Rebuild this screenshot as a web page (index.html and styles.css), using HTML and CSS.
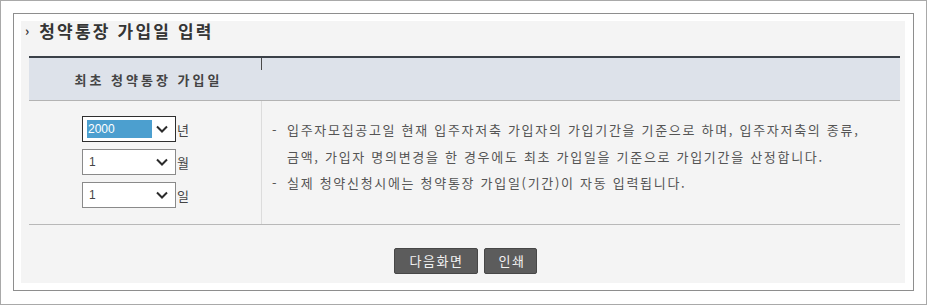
FILE: index.html
```html
<!DOCTYPE html>
<html lang="ko">
<head>
<meta charset="utf-8">
<title>청약통장 가입일 입력</title>
<link rel="stylesheet" href="styles.css">
</head>
<body>
<div class="page">
  <div class="frame">
    <div class="panel">
      <h2 class="title"><span class="bullet">›</span>청약통장 가입일 입력</h2>
      <div class="table">
        <div class="row head">
          <div class="cell left head-label">최초 청약통장 가입일</div>
          <div class="cell right head-right"></div>
        </div>
        <div class="row body">
          <div class="cell left selects">
            <div class="field">
              <div class="select focused"><span class="val sel">2000</span><svg class="chev" viewBox="0 0 12 8" width="12" height="8"><path d="M1 1.5 L6 6.5 L11 1.5" fill="none" stroke="#2b2b2b" stroke-width="2"/></svg></div>
              <span class="unit">년</span>
            </div>
            <div class="field">
              <div class="select"><span class="val">1</span><svg class="chev" viewBox="0 0 12 8" width="12" height="8"><path d="M1 1.5 L6 6.5 L11 1.5" fill="none" stroke="#2b2b2b" stroke-width="2"/></svg></div>
              <span class="unit">월</span>
            </div>
            <div class="field">
              <div class="select"><span class="val">1</span><svg class="chev" viewBox="0 0 12 8" width="12" height="8"><path d="M1 1.5 L6 6.5 L11 1.5" fill="none" stroke="#2b2b2b" stroke-width="2"/></svg></div>
              <span class="unit">일</span>
            </div>
          </div>
          <div class="cell right notes">
            <p class="note">입주자모집공고일 현재 입주자저축 가입자의 가입기간을 기준으로 하며, 입주자저축의 종류,<br>금액, 가입자 명의변경을 한 경우에도 최초 가입일을 기준으로 가입기간을 산정합니다.</p>
            <p class="note">실제 청약신청시에는 청약통장 가입일(기간)이 자동 입력됩니다.</p>
          </div>
        </div>
      </div>
      <div class="buttons">
        <button class="btn btn-next" type="button">다음화면</button>
        <button class="btn btn-print" type="button">인쇄</button>
      </div>
    </div>
  </div>
</div>
</body>
</html>
```

FILE: styles.css
```css
* { box-sizing: border-box; }
html, body {
  margin: 0;
  padding: 0;
  background: #ffffff;
  font-family: "Noto Sans CJK KR", "Noto Sans", sans-serif;
}
.page {
  width: 927px;
  height: 305px;
  border: 1px solid #a9a9a9;
  padding: 12px 12px 13px 12px;
}
.frame {
  width: 901px;
  height: 278px;
  border: 1px solid #8e8e8e;
  padding: 7px 8px 7px 7px;
  background: #fff;
}
.panel {
  height: 100%;
  background: #f4f4f4;
  padding: 0 5px 0 8px;
  display: flex;
  flex-direction: column;
}
.title {
  margin: 1px 0 16px -4px;
  height: 18px;
  line-height: 18px;
  font-size: 17px;
  font-weight: bold;
  color: #353535;
  letter-spacing: 2.2px;
  display: flex;
  align-items: center;
}
.bullet {
  font-size: 13px;
  font-weight: bold;
  color: #333;
  margin-right: 10px;
  letter-spacing: 0;
}
.table {
  border-top: 2px solid #3b4148;
}
.row {
  display: flex;
}
.cell.left {
  width: 233px;
  flex: none;
}
.cell.right {
  flex: 1;
}
.head {
  height: 43px;
  background: #dde2ea;
  border-bottom: 1px solid #b3b3b3;
}
.head-label {
  display: flex;
  align-items: center;
  justify-content: center;
  font-size: 13px;
  font-weight: bold;
  letter-spacing: 3px;
  padding-left: 6px;
  color: #444;
}
.head-right {
  position: relative;
}
.head-right::before {
  content: "";
  position: absolute;
  left: -1px;
  top: 0;
  width: 1px;
  height: 12px;
  background: #4a4a4a;
}
.body {
  height: 124px;
  border-bottom: 1px solid #b8b8b8;
}
.selects {
  border-right: 1px solid #dcdcdc;
  padding: 15px 0 0 53px;
  display: flex;
  flex-direction: column;
  gap: 7px;
}
.field {
  display: flex;
  align-items: center;
}
.select {
  width: 94px;
  height: 26px;
  border: 1px solid #8a8a8a;
  background: #fff;
  display: flex;
  align-items: center;
  padding: 0 4px;
  justify-content: space-between;
}
.select.focused {
  border-color: #2e2e2e;
}
.val {
  font-family: "Liberation Sans", Arial, sans-serif;
  font-size: 12px;
  color: #444;
  padding-left: 2px;
  line-height: 18px;
}
.val.sel {
  background: #4c9fcf;
  color: #fff;
  width: 65px;
  padding-left: 1px;
}
.chev {
  margin-right: 3px;
}
.unit {
  font-size: 13px;
  color: #444;
  margin-left: 1px;
}
.notes {
  padding: 16px 0 0 10px;
}
.note {
  margin: 0;
  position: relative;
  padding-left: 15px;
  font-size: 13px;
  line-height: 26.5px;
  letter-spacing: 1.7px;
  color: #555;
  white-space: nowrap;
}
.note::before {
  content: "-";
  position: absolute;
  left: 0;
  top: 0;
}
.buttons {
  display: flex;
  justify-content: center;
  gap: 6px;
  padding-top: 23px;
  padding-left: 2px;
}
.btn {
  height: 26px;
  background: #5c5c5c;
  border: 1px solid #474747;
  border-radius: 2px;
  color: #f2f2f2;
  font-family: "Noto Sans CJK KR", sans-serif;
  font-size: 13px;
  letter-spacing: 1.5px;
  line-height: 24px;
}
.btn-next {
  padding: 0 14px 0 15px;
}
.btn-print {
  padding: 0 11px 0 13px;
}
```
